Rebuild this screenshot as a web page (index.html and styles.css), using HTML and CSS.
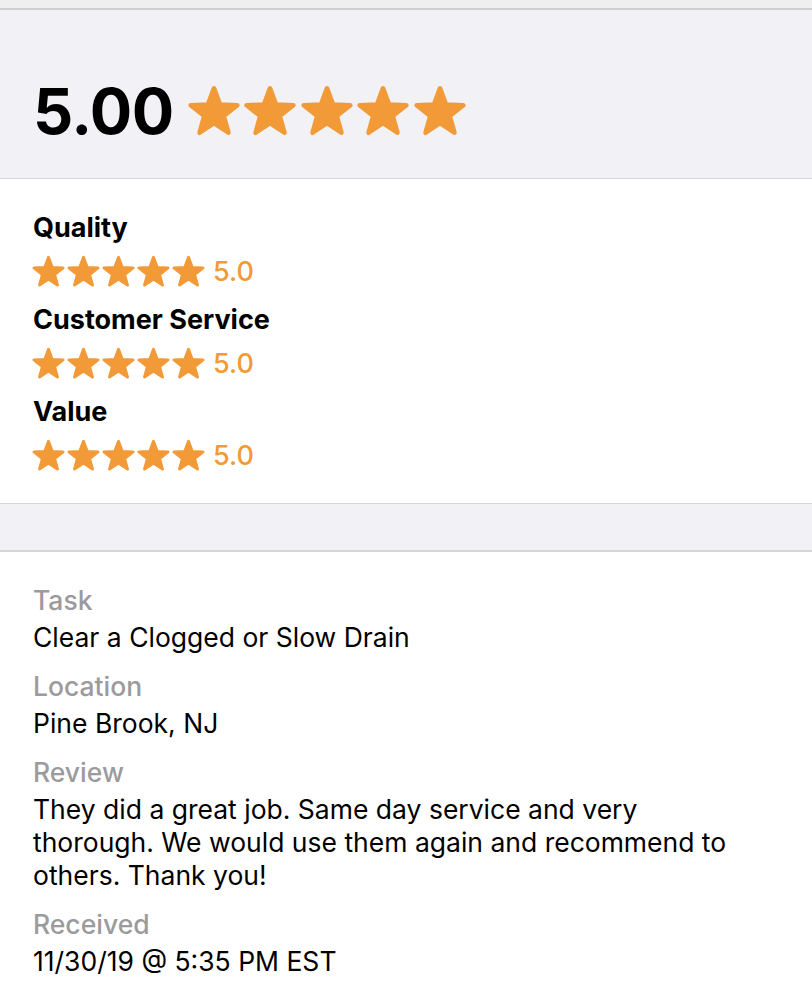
FILE: index.html
```html
<!DOCTYPE html>
<html lang="en">
<head>
<meta charset="utf-8">
<title>Review</title>
<link rel="stylesheet" href="styles.css">
</head>
<body>
<svg width="0" height="0" class="defs">
  <defs>
    <symbol id="star" viewBox="0 0 24 24">
      <polygon points="12,2.3 14.59,9.24 21.99,9.555 16.18,14.16 18.17,21.29 12,17.2 5.83,21.29 7.82,14.16 2.01,9.555 9.41,9.24" fill="#f19a37" stroke="#f19a37" stroke-width="2" stroke-linejoin="round"/>
    </symbol>
  </defs>
</svg>
<div class="topbar"></div>
<section class="summary">
  <span class="score">5.00</span>
  <span class="stars big">
    <svg><use href="#star"/></svg><svg><use href="#star"/></svg><svg><use href="#star"/></svg><svg><use href="#star"/></svg><svg><use href="#star"/></svg>
  </span>
</section>
<section class="ratings">
  <div class="rating">
    <div class="rating-label">Quality</div>
    <div class="rating-row">
      <span class="stars small"><svg><use href="#star"/></svg><svg><use href="#star"/></svg><svg><use href="#star"/></svg><svg><use href="#star"/></svg><svg><use href="#star"/></svg></span>
      <span class="rating-value">5.0</span>
    </div>
  </div>
  <div class="rating">
    <div class="rating-label">Customer Service</div>
    <div class="rating-row">
      <span class="stars small"><svg><use href="#star"/></svg><svg><use href="#star"/></svg><svg><use href="#star"/></svg><svg><use href="#star"/></svg><svg><use href="#star"/></svg></span>
      <span class="rating-value">5.0</span>
    </div>
  </div>
  <div class="rating">
    <div class="rating-label">Value</div>
    <div class="rating-row">
      <span class="stars small"><svg><use href="#star"/></svg><svg><use href="#star"/></svg><svg><use href="#star"/></svg><svg><use href="#star"/></svg><svg><use href="#star"/></svg></span>
      <span class="rating-value">5.0</span>
    </div>
  </div>
</section>
<div class="spacer"></div>
<section class="details">
  <div class="field">
    <div class="field-label">Task</div>
    <div class="field-value">Clear a Clogged or Slow Drain</div>
  </div>
  <div class="field">
    <div class="field-label">Location</div>
    <div class="field-value">Pine Brook, NJ</div>
  </div>
  <div class="field">
    <div class="field-label">Review</div>
    <div class="field-value">They did a great job. Same day service and very thorough. We would use them again and recommend to others. Thank you!</div>
  </div>
  <div class="field">
    <div class="field-label">Received</div>
    <div class="field-value">11/30/19 @ 5:35 PM EST</div>
  </div>
</section>
</body>
</html>
```

FILE: styles.css
```css
* { box-sizing: border-box; }
html, body { margin: 0; padding: 0; }
body {
  width: 812px;
  background: #ffffff;
  font-family: Inter, "Noto Sans", "Liberation Sans", sans-serif;
  color: #000000;
}
.defs { position: absolute; width: 0; height: 0; }
.topbar {
  height: 10px;
  background: #efeff0;
  border-bottom: 2px solid #cfcfd3;
}
.summary {
  height: 169px;
  background: #f2f1f6;
  border-bottom: 1px solid #d6d6da;
  display: flex;
  align-items: center;
  padding: 34px 0 0 33px;
}
.score {
  font-size: 63px;
  font-weight: 700;
  letter-spacing: -0.6px;
  line-height: 1;
}
.stars { display: flex; }
.stars svg { display: block; flex: none; }
.stars.big { margin-left: 12px; gap: 0.5px; }
.stars.big svg { width: 56px; height: 56px; }
.stars.small svg { width: 35px; height: 35px; }
.ratings {
  padding: 33px 0 20px 33px;
  display: flex;
  flex-direction: column;
  gap: 5px;
}
.rating-label {
  font-size: 27px;
  font-weight: 700;
  line-height: 32px;
}
.rating-row {
  display: flex;
  align-items: center;
  margin-left: -2px;
  height: 55px;
}
.rating-value {
  margin-left: 7px;
  font-size: 27px;
  font-weight: 500;
  color: #f19a37;
}
.spacer {
  height: 49px;
  background: #f2f1f6;
  border-top: 1px solid #d6d6da;
  border-bottom: 2px solid #d6d6da;
}
.details {
  padding: 31px 69px 30px 33px;
  display: flex;
  flex-direction: column;
  gap: 15px;
}
.field-label {
  font-size: 26.5px;
  font-weight: 500;
  color: #9b9b9e;
  line-height: 34px;
  margin-bottom: 4px;
}
.field-value {
  font-size: 26.5px;
  line-height: 33px;
}
```
